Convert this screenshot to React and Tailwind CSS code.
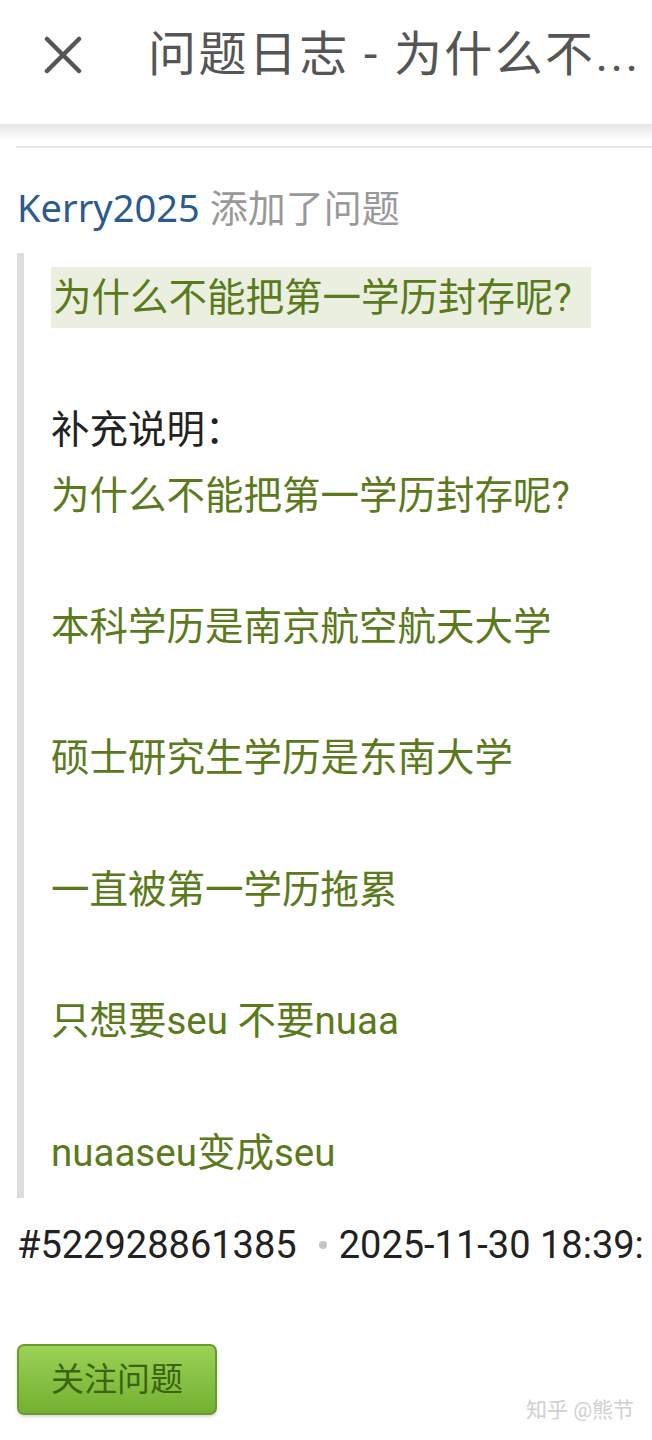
import React from "react";

const cjk = { fontFamily: 'Roboto, "Noto Sans CJK SC", sans-serif' };
const noto = { fontFamily: '"Noto Sans", "Noto Sans CJK SC", sans-serif' };

const lines = [
  "本科学历是南京航空航天大学",
  "硕士研究生学历是东南大学",
  "一直被第一学历拖累",
  "只想要seu 不要nuaa",
  "nuaaseu变成seu",
];

const App = () => {
  return (
    <div className="relative w-[652px] h-[1440px] bg-white overflow-hidden" style={cjk}>
      {/* top bar */}
      <div className="h-[124px] flex items-center bg-white">
        <svg className="ml-[44px] -mt-[14px] w-[38px] h-[38px]" viewBox="0 0 38 38" fill="none">
          <path d="M3 3 L35 35 M35 3 L3 35" stroke="#555" strokeWidth="4.5" strokeLinecap="round" />
        </svg>
        <div className="ml-[66px] -mt-[14px] text-[48px] leading-none text-[#555] whitespace-nowrap tracking-[2.4px]">
          问题日志 - 为什么不...
        </div>
      </div>
      <div className="h-[16px] bg-gradient-to-b from-[#e6e6e6] to-white" />
      <div className="ml-[16px] h-[2px] bg-[#e6e6e6] mt-[6px]" />

      <div className="px-[17px]">
        <div className="mt-[37px] text-[38px] leading-[44px] whitespace-nowrap" style={noto}>
          <span className="text-[#2b5a8c]">Kerry2025</span>
          <span className="text-[#999] ml-[10px]">添加了问题</span>
        </div>

        <div className="mt-[24px] border-l-[7px] border-[#dddddd] pl-[27px] pt-[14px] pb-[13px] text-[38.5px] leading-[65.7px] text-[#5b7a1c] whitespace-nowrap">
          <div className="bg-[#eaefe0] w-[540px] h-[61px] leading-[61px] pl-[2px]">
            为什么不能把第一学历封存呢?
          </div>
          <div className="h-[69px]" />
          <div className="text-[#222]">补充说明：</div>
          <div>为什么不能把第一学历封存呢?</div>
          {lines.map((l) => (
            <React.Fragment key={l}>
              <div className="h-[65.7px]" />
              <div>{l}</div>
            </React.Fragment>
          ))}
        </div>

        <div className="mt-[23px] flex items-center whitespace-nowrap text-[38px] leading-[48px] text-[#222]">
          <span>#522928861385</span>
          <span className="ml-[22px] mr-[12px] w-[8px] h-[8px] rounded-full bg-[#c4c4c4] shrink-0" />
          <span>2025-11-30 18:39:</span>
        </div>

        <button className="mt-[75px] w-[200px] h-[71px] rounded-[7px] border-2 border-[#6a9a2e] bg-gradient-to-b from-[#9ad255] to-[#74b030] text-[33px] text-[#3a6412] shadow-[0_2px_3px_rgba(0,0,0,0.15)] flex items-center justify-center">
          关注问题
        </button>
      </div>

      <div className="absolute right-[18px] bottom-[14px] text-[21px] text-[#d0d0d0] whitespace-nowrap">
        知乎 @熊节
      </div>
    </div>
  );
};

export default App;
